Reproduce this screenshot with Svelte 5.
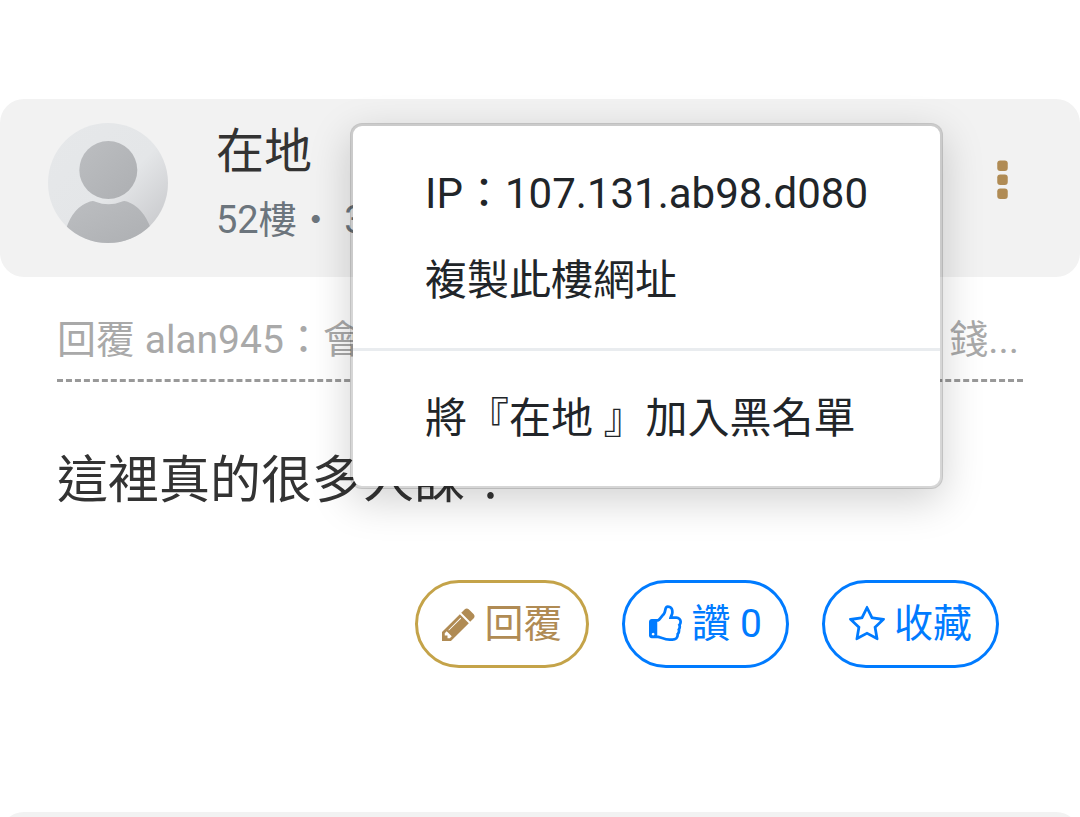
<script>
	const user = '在地';
	const ip = '107.131.ab98.d080';

	let menuOpen = $state(true);
	let likes = $state(0);
</script>

<main>
	<article class="post">
		<header class="post-head">
			<svg class="avatar" viewBox="0 0 120 120" role="img" aria-label={user}>
				<defs>
					<linearGradient id="back" x1="0" y1="0" x2="1" y2="1">
						<stop offset="0" stop-color="#e6e8ea" />
						<stop offset="0.55" stop-color="#e4e6e8" />
						<stop offset="0.88" stop-color="#cbcccf" />
					</linearGradient>
					<linearGradient id="front" x1="0" y1="0" x2="1" y2="1">
						<stop offset="0" stop-color="#bcbec1" />
						<stop offset="1" stop-color="#adafb2" />
					</linearGradient>
					<clipPath id="round"><circle cx="60" cy="60" r="60" /></clipPath>
				</defs>
				<circle cx="60" cy="60" r="60" fill="url(#back)" />
				<g fill="url(#front)" clip-path="url(#round)">
					<circle cx="60.3" cy="47" r="29" />
					<path d="M18 106Q25 84 42 78.5Q45 77.3 47.5 78.7Q60.5 84 73.5 78.7Q76 77.3 79 78.5Q95 84 103 106L90 122H30Z" />
				</g>
			</svg>
			<div class="who">
				<div class="name">{user}</div>
				<div class="meta">52樓・ 3小時前</div>
			</div>
			<button class="more" aria-label="更多" onclick={() => (menuOpen = !menuOpen)}>
				<svg viewBox="704 0 384 1792">
					<rect x="704" y="128" width="384" height="384" rx="110" />
					<rect x="704" y="640" width="384" height="384" rx="110" />
					<rect x="704" y="1152" width="384" height="384" rx="110" />
				</svg>
			</button>

			{#if menuOpen}
				<div class="menu">
					<div class="item">IP：{ip}</div>
					<button class="item">複製此樓網址</button>
					<hr />
					<button class="item">將『{user} 』加入黑名單</button>
				</div>
			{/if}
		</header>

		<div class="post-body">
			<p class="quote">回覆 alan945：會不會其實大家都只是想要多賺3 萬 錢...</p>
			<p class="text">這裡真的很多人課！</p>
			<div class="actions">
				<button class="pill reply">
					<svg viewBox="128 0 1536 1792" class="icon"><path d="M491 1536l91-91-235-235-91 91v107h128v128h107zm523-928q0-22-22-22-10 0-17 7l-542 542q-7 7-7 17 0 22 22 22 10 0 17-7l542-542q7-7 7-17zm-54-192l416 416-832 832h-416v-416zm683 96q0 53-37 90l-166 166-416-416 166-165q36-38 90-38 53 0 91 38l235 234q37 39 37 91z" /></svg>
					<span>回覆</span>
				</button>
				<button class="pill" onclick={() => (likes += 1)}>
					<svg viewBox="128 0 1536 1792" class="icon"><path d="M384 1344q0-26-19-45t-45-19-45 19-19 45 19 45 45 19 45-19 19-45zm1152-576q0-51-39-89.5t-89-38.5h-352q0-58 48-159.5t48-160.5q0-98-32-145t-128-47q-26 26-38 85t-30.5 125.5-59.5 109.5q-22 23-77 91-4 5-23 30t-31.5 41-34.5 42.5-40 44-38.5 35.5-40 27-35.5 9h-32v640h32q13 0 31.5 3t33 6.5 38 11 35 11.5 35.5 12.5 29 10.5q211 73 342 73h121q192 0 192-167 0-26-5-56 30-16 47.5-52.5t17.5-73.5-18-69q53-50 53-119 0-25-10-55.5t-25-47.5q32-1 53.5-47t21.5-81zm128-1q0 89-49 163 9 33 9 69 0 77-38 144 3 21 3 43 0 101-60 178 1 139-85 219.5t-227 80.5h-129q-96 0-189.5-22.5t-216.5-65.5q-116-40-138-40h-288q-53 0-90.5-37.5t-37.5-90.5v-640q0-53 37.5-90.5t90.5-37.5h274q36-24 137-155 58-75 107-128 24-25 35.5-85.5t30.5-126.5 62-108q39-37 90-37 84 0 151 32.5t102 101.5 35 186q0 93-48 192h176q104 0 180 76t76 179z" /></svg>
					<span>讚 {likes}</span>
				</button>
				<button class="pill">
					<svg viewBox="64 0 1664 1792" class="icon wide"><path d="M1201 1004l306-297-422-62-189-382-189 382-422 62 306 297-73 421 378-199 377 199zm527-357q0 22-26 48l-363 354 86 500q1 7 1 20 0 50-41 50-19 0-40-12l-449-236-449 236q-22 12-40 12-21 0-31.5-14.5t-10.5-35.5q0-6 2-20l86-500-364-354q-25-27-25-48 0-37 56-46l502-73 225-455q19-41 49-41t49 41l225 455 502 73q56 9 56 46z" /></svg>
					<span>收藏</span>
				</button>
			</div>
		</div>
	</article>

	<!-- Next post starts below -->
	<article class="post">
		<header class="post-head"></header>
	</article>
</main>

<style>
	:global(body) {
		background: #fff;
		overflow: hidden;
	}

	main {
		height: 100vh;
		overflow: hidden;
		box-sizing: border-box;
		padding-top: 99px;
		font-family: Roboto, 'Noto Sans CJK TC', sans-serif;
		color: #333;
	}

	button {
		font: inherit;
		color: inherit;
		background: none;
		border: 0;
		padding: 0;
		cursor: pointer;
	}

	svg {
		display: block;
		flex: none;
		fill: currentColor;
	}

	.post {
		margin-bottom: 144px;
	}

	.post-head {
		position: relative;
		display: flex;
		align-items: flex-start;
		min-height: 136px;
		padding: 24px 72px 18px 48px;
		background: #f2f2f2;
		border-radius: 24px;
	}

	.avatar {
		width: 120px;
		height: 120px;
	}

	.who {
		flex: 1;
		margin-left: 48px;
		white-space: nowrap;
	}

	.name {
		font-size: 48px;
		line-height: 58px;
	}

	.meta {
		font-size: 38px;
		line-height: 78px;
		color: #6c757d;
	}

	.more {
		margin-top: 34px;
		color: #b08b54;
	}

	.more svg {
		width: 11px;
		height: 49px;
	}

	/* Dropdown over the post */
	.menu {
		position: absolute;
		top: 24px;
		right: 137px;
		z-index: 10;
		padding: 24px 0;
		background: #fff;
		background-clip: padding-box;
		border: 3px solid rgba(0, 0, 0, 0.16);
		border-radius: 12px;
		box-shadow: 0 12px 42px rgba(0, 0, 0, 0.18);
		color: #212529;
	}

	.item {
		display: block;
		width: 100%;
		box-sizing: border-box;
		padding: 12px 72px;
		font-size: 42px;
		line-height: 63px;
		text-align: left;
		white-space: nowrap;
	}

	.menu hr {
		height: 3px;
		margin: 24px 0;
		border: 0;
		background: #e9ecef;
	}

	.post-body {
		padding: 33px 57px 0;
	}

	.quote {
		margin: 0;
		padding-bottom: 9px;
		border-bottom: 3px dashed #999;
		font-size: 39px;
		line-height: 60px;
		color: #a9a9a9;
		white-space: nowrap;
		overflow: hidden;
	}

	.text {
		margin: 60px 0;
		font-size: 51px;
		line-height: 78px;
	}

	.actions {
		display: flex;
		justify-content: flex-end;
		gap: 33px;
		padding-right: 24px;
	}

	.pill {
		display: flex;
		align-items: center;
		gap: 9px;
		padding: 12px 24px;
		border: 3px solid #007bff;
		border-radius: 44px;
		color: #007bff;
		font-size: 39px;
		line-height: 58px;
	}

	.pill.reply {
		border-color: #c4a349;
		color: #b08b54;
	}

	.icon {
		width: 33px;
		height: 39px;
	}

	.icon.wide {
		width: 36px;
	}
</style>
